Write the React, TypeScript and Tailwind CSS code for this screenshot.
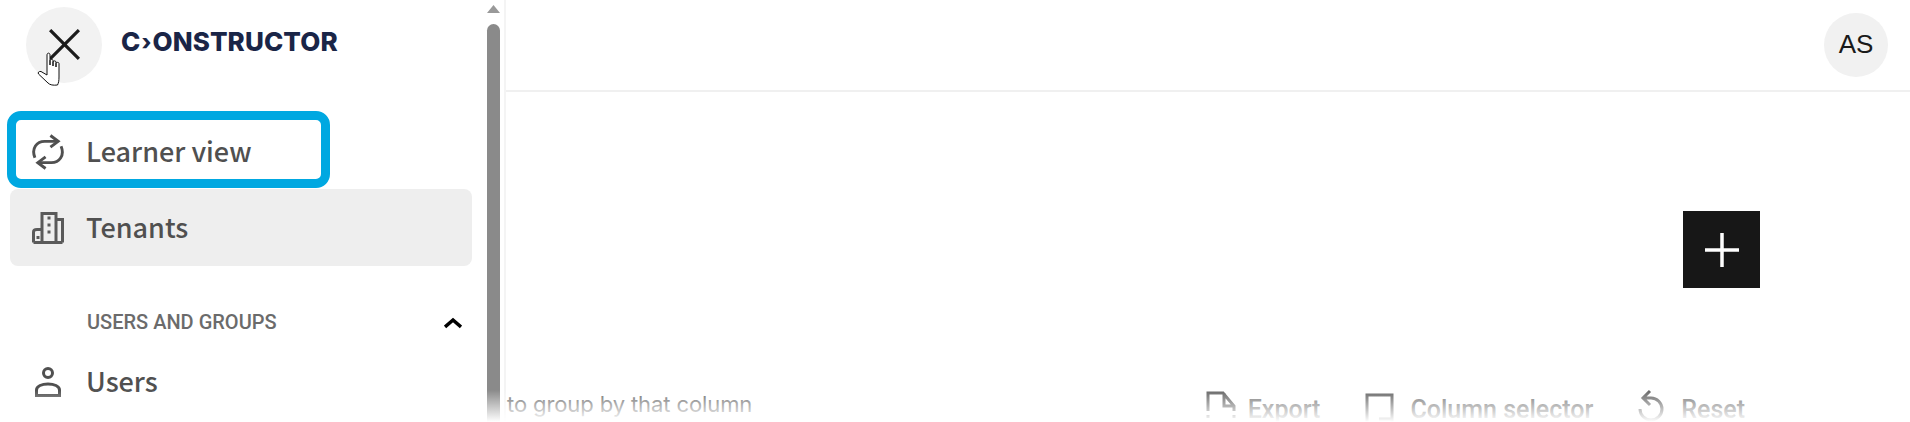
import React from "react";

function MenuRow({ icon, label, active, className }: { icon: React.ReactNode; label: string; active?: boolean; className?: string }) {
  return (
    <div className={`flex items-center w-[462px] h-[77px] ml-[10px] pl-[22px] rounded-[8px] ${active ? "bg-[#eeeeee]" : ""} ${className ?? ""}`}>
      <span className="flex justify-center w-[32px] shrink-0">{icon}</span>
      <span className="ml-[22px] -mt-[1px] font-['Noto_Sans_CJK_SC'] font-medium text-[27px] text-[#505050]">{label}</span>
    </div>
  );
}

function App() {
  return (
    <div className="relative flex w-[1910px] h-[422px] overflow-hidden bg-white">
      {/* Sidebar */}
      <aside className="flex w-[506px] h-full shrink-0 border-r-2 border-[#f4f4f4]">
        <div className="w-[487px] shrink-0">
          <div className="flex items-start h-[112px]">
            <button className="flex items-center justify-center w-[76px] h-[76px] mt-[7px] ml-[26px] rounded-full bg-[#f2f2f2]">
              <svg width="32" height="32" viewBox="0 0 30 30" fill="none" stroke="#1c1c1c" strokeWidth="3">
                <path d="M2 1 L29 28 M29 1 L2 28" />
              </svg>
            </button>
            <div className="flex items-center h-[24px] mt-[30px] ml-[19px] font-['Inter'] font-extrabold text-[26px] leading-none text-[#1a2547] tracking-[0.1px]">
              C<span className="text-[22px] font-extrabold mx-[1px]">›</span>ONSTRUCTOR
            </div>
          </div>

          <MenuRow
            className="pt-[2px]"
            label="Learner view"
            icon={
              <svg width="33" height="36" viewBox="0 0 33 36" fill="none" stroke="#505050" strokeWidth="3">
                <path d="M3 24 C-1 14 5 7 13 7 H27" />
                <path d="M19 1 L27 7 L19 13" />
                <path d="M30 12 C34 22 28 29 20 29 H6" />
                <path d="M14 23 L6 29 L14 35" />
              </svg>
            }
          />
          <MenuRow
            active
            label="Tenants"
            icon={
              <svg width="32" height="32" viewBox="0 0 32 32" fill="none" stroke="#5a5a5a" strokeWidth="3">
                <path d="M1.5 30.5 H30.5 M1.5 30.5 V20 C1.5 18 3 17.5 5 17.5 H10 M10 30.5 V1.5 H24 V30.5 M24 7.5 H30.5 V30.5" />
                <path d="M15.5 6 h3 M15.5 13 h3 M15.5 20 h3 M6 24 v3" />
              </svg>
            }
          />

          <div className="flex items-center justify-between h-[77px] pt-[35px] pl-[87px] pr-[25px]">
            <span className="font-['Roboto'] font-medium text-[20px] text-[#6b6b6b]">USERS AND GROUPS</span>
            <svg width="18" height="12" viewBox="0 0 18 12" fill="none" stroke="#000000" strokeWidth="3.5" className="mt-[2px]">
              <path d="M1 10 L9 3 L17 10" />
            </svg>
          </div>

          <MenuRow
            label="Users"
            icon={
              <svg width="26" height="30" viewBox="0 0 26 30" fill="none" stroke="#505050" strokeWidth="3">
                <circle cx="13" cy="6" r="4.5" />
                <path d="M1.5 28.5 V23 C1.5 19 7 17 13 17 C19 17 24.5 19 24.5 23 V28.5 Z" />
              </svg>
            }
          />
        </div>

        {/* Scrollbar */}
        <div className="flex flex-col items-center w-[13px] shrink-0">
          <svg width="13" height="8" viewBox="0 0 13 8" className="mt-[5px] shrink-0" fill="#999999">
            <path d="M6.5 0 L13 8 H0 Z" />
          </svg>
          <div className="w-[13px] flex-1 mt-[11px] rounded-t-full bg-[#8a8a8a]" />
        </div>
      </aside>

      {/* Main */}
      <main className="flex-1 flex flex-col min-w-0">
        <header className="flex items-start justify-end h-[92px] shrink-0 border-b-2 border-[#f0f0f0] pr-[22px]">
          <div className="flex items-center justify-center w-[64px] h-[64px] mt-[13px] pb-[1px] rounded-full bg-[#f1f1f1] font-['Liberation_Sans'] text-[26px] text-[#1a1a1a]">
            AS
          </div>
        </header>
        <div className="flex justify-end pt-[119px] pr-[150px]">
          <button className="flex items-center justify-center w-[77px] h-[77px] bg-[#171717]">
            <svg width="34" height="34" viewBox="0 0 34 34" stroke="#ffffff" strokeWidth="3.5">
              <path d="M17 0 V34 M0 17 H34" />
            </svg>
          </button>
        </div>
        <div className="flex items-start justify-between pt-[103px] pl-[1px] pr-[165px] text-[#777777]">
          <span className="font-['Inter'] text-[22px] text-[#6e6e6e] tracking-[-0.1px] leading-[26px]">to group by that column</span>
          <div className="flex items-start font-['Roboto'] font-medium text-[25px] leading-[26px]">
            <div className="flex items-start">
              <svg width="31" height="40" viewBox="0 0 31 40" fill="none" stroke="#666666" strokeWidth="3">
                <path d="M2 20 V2 H17 L28 15 V20 M18 2 V15 H28 M2 24 V27 M28 24 V27" />
              </svg>
              <span className="ml-[11px] mt-[6px]">Export</span>
            </div>
            <div className="flex items-start ml-[45px]">
              <svg width="29" height="40" viewBox="0 0 29 40" fill="none" stroke="#666666" strokeWidth="3" className="mt-[2px]">
                <path d="M2 30 V2 H27 V30 M14 26 H27" />
              </svg>
              <span className="ml-[16px] mt-[6px]">Column selector</span>
            </div>
            <div className="flex items-start ml-[45px]">
              <svg width="26" height="40" viewBox="0 0 26 40" fill="none" stroke="#666666" strokeWidth="3" className="-mt-[2px]">
                <path d="M12 2 L5 9 L12 16 M5 9 H13 C19 9 24 14 24 20 C24 26 19 31 13 31 C7 31 2 26 2 20" />
              </svg>
              <span className="ml-[17px] mt-[6px]">Reset</span>
            </div>
          </div>
        </div>
      </main>

      {/* Highlight drawn over the screenshot */}
      <div className="absolute left-[7px] top-[111px] w-[323px] h-[77px] border-[9px] border-[#00a8e1] rounded-[14px]" />

      {/* Bottom fade */}
      <div className="absolute inset-x-0 bottom-0 h-[32px] bg-linear-to-b from-white/0 to-white" />

      {/* Mouse cursor */}
      <svg width="28" height="34" viewBox="0 0 28 34" className="absolute left-[37px] top-[52px]" fill="#ffffff" stroke="#111111" strokeWidth="1">
        <path d="M10 16 V3 C10 0.5 13 0.5 13 3 V13 V8.5 C13 7 16 7 16 8.5 V14 V10 C16 8.5 19 8.5 19 10 V15 V11.5 C19 10 22 10 22 11.5 V25 C22 29 21.5 31 20.5 33 C16 33.5 13 33 11 31 L1.5 22 C0.5 20.5 2 19 4 19.5 L10 23 Z" />
      </svg>
    </div>
  );
}

export default App;
